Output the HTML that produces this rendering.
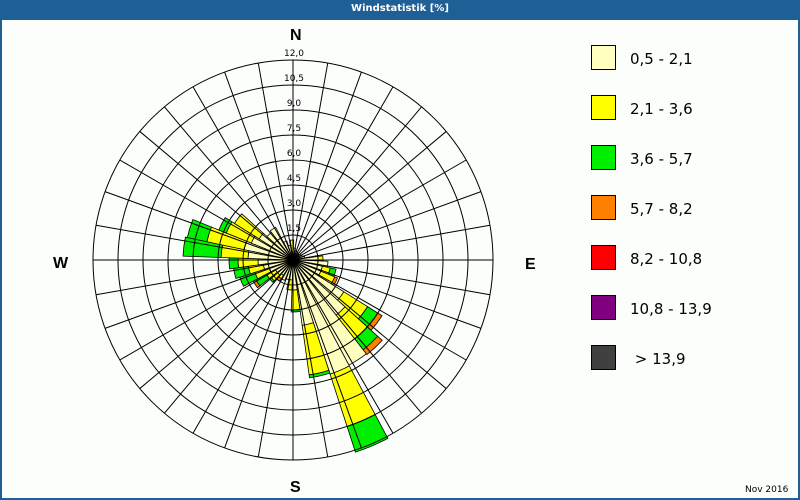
<!DOCTYPE html>
<html><head><meta charset="utf-8"><style>
html,body{margin:0;padding:0;background:#fcfefc;}
#w{position:relative;width:800px;height:500px;overflow:hidden;background:#fcfefc;font-family:"DejaVu Sans","Liberation Sans",sans-serif;}
#t{position:absolute;left:0;top:0;width:800px;height:20px;background:#1e5f95;color:#fff;font:bold 10px "DejaVu Sans",sans-serif;text-align:center;line-height:18px;}
#bl{position:absolute;left:0;top:20px;width:2px;height:480px;background:#1e5f95;}
#br{position:absolute;right:0;top:20px;width:2px;height:480px;background:#1e5f95;}
#bb{position:absolute;left:0;bottom:0;width:800px;height:2px;background:#1e5f95;}
.lg{position:absolute;left:591px;width:23px;height:23px;border:1px solid #000;}
.lt{position:absolute;left:630px;font-size:15px;color:#000;}
.c{position:absolute;font:bold 16px "Liberation Sans",sans-serif;color:#000;}
</style></head><body><div id="w">
<div id="t">Windstatistik [%]</div>
<svg id="s" width="800" height="500" style="position:absolute;left:0;top:0">
<g id="bars"></g><g id="grid" stroke="#000" stroke-width="1" fill="none"></g>
<g font-family="DejaVu Sans,sans-serif" font-size="9" text-anchor="middle" fill="#000">
<text x="294" y="56">12,0</text><text x="294" y="81">10,5</text><text x="294" y="106">9,0</text>
<text x="294" y="131">7,5</text><text x="294" y="156">6,0</text><text x="294" y="181">4,5</text>
<text x="294" y="206">3,0</text><text x="294" y="231">1,5</text></g>
<circle cx="293" cy="260" r="6" fill="#000"/>
</svg>
<div class="c" style="left:290px;top:27px">N</div>
<div class="c" style="left:53px;top:255px">W</div>
<div class="c" style="left:525px;top:256px">E</div>
<div class="c" style="left:290px;top:479px">S</div>
<div class="lg" style="top:45px;background:#ffffc0"></div><div class="lt" style="top:50px">0,5 - 2,1</div>
<div class="lg" style="top:95px;background:#ffff00"></div><div class="lt" style="top:100px">2,1 - 3,6</div>
<div class="lg" style="top:145px;background:#00ee00"></div><div class="lt" style="top:150px">3,6 - 5,7</div>
<div class="lg" style="top:195px;background:#ff8000"></div><div class="lt" style="top:200px">5,7 - 8,2</div>
<div class="lg" style="top:245px;background:#ff0000"></div><div class="lt" style="top:250px">8,2 - 10,8</div>
<div class="lg" style="top:295px;background:#800080"></div><div class="lt" style="top:300px">10,8 - 13,9</div>
<div class="lg" style="top:345px;background:#404040"></div><div class="lt" style="top:350px">&nbsp;&gt; 13,9</div>
<div style="position:absolute;left:745px;top:485px;font-size:9px">Nov 2016</div>
<div id="bl"></div><div id="br"></div><div id="bb"></div>
</div>
<script>
var cx=293,cy=260,NS="http://www.w3.org/2000/svg";
function P(r,a){a=a*Math.PI/180;return [cx+r*Math.sin(a),cy-r*Math.cos(a)];}
var g=document.getElementById('grid'),b=document.getElementById('bars');
for(var i=1;i<=8;i++){var c=document.createElementNS(NS,'circle');c.setAttribute('cx',cx);c.setAttribute('cy',cy);c.setAttribute('r',i*25);g.appendChild(c);}
for(var a=0;a<360;a+=10){var p=P(200,a),l=document.createElementNS(NS,'line');l.setAttribute('x1',cx);l.setAttribute('y1',cy);l.setAttribute('x2',p[0]);l.setAttribute('y2',p[1]);g.appendChild(l);}
var cols=['#ffffc0','#ffff00','#00ee00','#ff8000'];
var d={0:[8,20],10:[12],20:[10],30:[9],40:[8],50:[8],60:[9],70:[10],80:[12],90:[25,30],100:[35],110:[30,38,44],120:[30,45,45,48],130:[60,88,100,105],140:[70,100,114,120],150:[119],160:[120,175,202],170:[66,116,119],180:[30,50,52],190:[20,30],200:[20],210:[22],220:[18,22,22,25],230:[20,28,30],240:[20,30,42,45],250:[25,40,56],260:[30,45,60],270:[35,55,64],280:[45,72,110],290:[50,88,108],300:[45,72,80],310:[40,69],320:[35],330:[37],340:[20],350:[15]};
for(var k in d){var a=+k-3,rs=d[k],r0=0;for(var j=0;j<rs.length;j++){var r1=rs[j];if(r1>r0){var a1=a-5,a2=a+5,p1=P(r0,a1),p2=P(r1,a1),p3=P(r1,a2),p4=P(r0,a2);
var pa=document.createElementNS(NS,'path');pa.setAttribute('d','M'+p1+'L'+p2+'A'+r1+' '+r1+' 0 0 1 '+p3+'L'+p4+(r0>0?'A'+r0+' '+r0+' 0 0 0 '+p1:'')+'Z');
pa.setAttribute('fill',cols[j]);pa.setAttribute('stroke','#000');pa.setAttribute('stroke-width','0.8');b.appendChild(pa);}r0=r1;}}
</script>
</body></html>
